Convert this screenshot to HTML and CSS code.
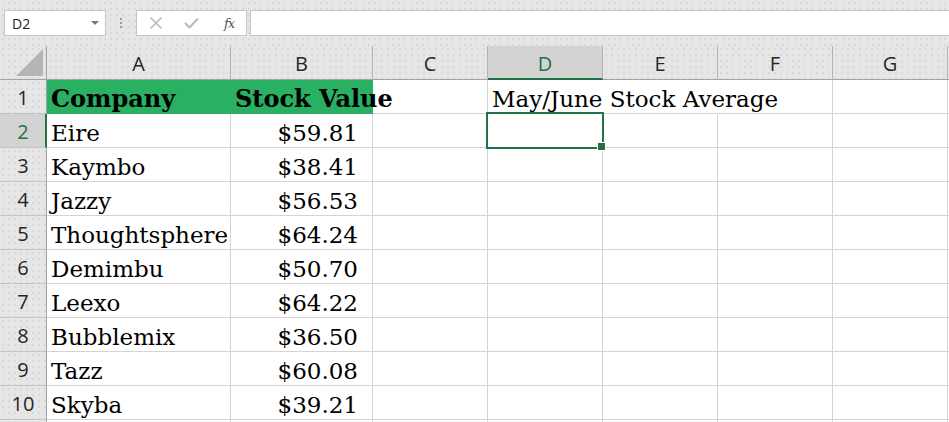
FILE: index.html
```html
<!DOCTYPE html>
<html lang="en">
<head>
<meta charset="utf-8">
<title>Stock Values</title>
<link rel="stylesheet" href="styles.css">
</head>
<body>
<div class="fbar">
  <div class="namebox"><span class="ref">D2</span><span class="caret"></span></div>
  <div class="grip"><i></i><i></i><i></i></div>
  <div class="fxbox">
    <svg class="ico" width="14" height="14" viewBox="0 0 14 14"><path d="M1.5 1.5 L12.5 12.5 M12.5 1.5 L1.5 12.5" stroke="#b9b9b9" stroke-width="1.6" fill="none"/></svg>
    <svg class="ico" width="15" height="12" viewBox="0 0 15 12"><path d="M1 6 L5.5 10.5 L14 1.5" stroke="#b9b9b9" stroke-width="2" fill="none"/></svg>
    <span class="fx">fx</span>
  </div>
  <div class="finput"></div>
</div>

<div class="sheet">
  <div class="corner"><svg width="27" height="27" viewBox="0 0 27 27"><polygon points="27,0 27,27 0,27" fill="#b5b5b5"/></svg></div>
  <div class="ch">A</div>
  <div class="ch">B</div>
  <div class="ch">C</div>
  <div class="ch sel">D</div>
  <div class="ch">E</div>
  <div class="ch">F</div>
  <div class="ch">G</div>
  <div class="ch rest"></div>

  <div class="rh">1</div>
  <div class="c hd">Company</div>
  <div class="c hd">Stock Value</div>
  <div class="c"></div>
  <div class="c spill">May/June Stock Average</div>
  <div class="c spill"></div>
  <div class="c"></div>
  <div class="c"></div>
  <div class="c rest"></div>

  <div class="rh sel">2</div>
  <div class="c">Eire</div>
  <div class="c num">$59.81</div>
  <div class="c"></div>
  <div class="c active"></div>
  <div class="c"></div>
  <div class="c"></div>
  <div class="c"></div>
  <div class="c rest"></div>

  <div class="rh">3</div>
  <div class="c">Kaymbo</div>
  <div class="c num">$38.41</div>
  <div class="c"></div><div class="c"></div><div class="c"></div><div class="c"></div><div class="c"></div><div class="c rest"></div>

  <div class="rh">4</div>
  <div class="c">Jazzy</div>
  <div class="c num">$56.53</div>
  <div class="c"></div><div class="c"></div><div class="c"></div><div class="c"></div><div class="c"></div><div class="c rest"></div>

  <div class="rh">5</div>
  <div class="c">Thoughtsphere</div>
  <div class="c num">$64.24</div>
  <div class="c"></div><div class="c"></div><div class="c"></div><div class="c"></div><div class="c"></div><div class="c rest"></div>

  <div class="rh">6</div>
  <div class="c">Demimbu</div>
  <div class="c num">$50.70</div>
  <div class="c"></div><div class="c"></div><div class="c"></div><div class="c"></div><div class="c"></div><div class="c rest"></div>

  <div class="rh">7</div>
  <div class="c">Leexo</div>
  <div class="c num">$64.22</div>
  <div class="c"></div><div class="c"></div><div class="c"></div><div class="c"></div><div class="c"></div><div class="c rest"></div>

  <div class="rh">8</div>
  <div class="c">Bubblemix</div>
  <div class="c num">$36.50</div>
  <div class="c"></div><div class="c"></div><div class="c"></div><div class="c"></div><div class="c"></div><div class="c rest"></div>

  <div class="rh">9</div>
  <div class="c">Tazz</div>
  <div class="c num">$60.08</div>
  <div class="c"></div><div class="c"></div><div class="c"></div><div class="c"></div><div class="c"></div><div class="c rest"></div>

  <div class="rh">10</div>
  <div class="c">Skyba</div>
  <div class="c num">$39.21</div>
  <div class="c"></div><div class="c"></div><div class="c"></div><div class="c"></div><div class="c"></div><div class="c rest"></div>

  <div class="rh"></div>
  <div class="c"></div><div class="c"></div><div class="c"></div><div class="c"></div><div class="c"></div><div class="c"></div><div class="c"></div><div class="c rest"></div>
</div>
</body>
</html>
```

FILE: styles.css
```css
* { box-sizing: border-box; }

html, body {
  margin: 0;
  height: 100%;
  overflow: hidden;
}

body {
  background-color: #e6e6e6;
  background-image: radial-gradient(circle, #d9d9d9 0.7px, transparent 0.9px);
  background-size: 6px 6px;
  font-family: "Open Sans", "Noto Sans", sans-serif;
}

/* ---------- formula bar ---------- */
.fbar {
  height: 46px;
  display: flex;
  align-items: flex-start;
  padding: 10px 0 0 4px;
}

.namebox {
  width: 102px;
  height: 26px;
  background: #fff;
  border: 1px solid #c6c6c6;
  display: flex;
  align-items: center;
  justify-content: space-between;
  padding: 0 6px 0 7px;
}

.ref {
  font-size: 14px;
  color: #222;
}

.caret {
  width: 0;
  height: 0;
  border-left: 4px solid transparent;
  border-right: 4px solid transparent;
  border-top: 4px solid #7a7a7a;
}

.grip {
  width: 30px;
  height: 26px;
  display: flex;
  flex-direction: column;
  align-items: center;
  justify-content: center;
  gap: 2px;
}

.grip i {
  display: block;
  width: 2px;
  height: 2px;
  background: #9c9c9c;
}

.fxbox {
  width: 111px;
  height: 26px;
  background: #fff;
  border: 1px solid #c6c6c6;
  display: flex;
  align-items: center;
  padding-left: 12px;
  gap: 21px;
}

.ico { display: block; }

.fx {
  font-family: "DejaVu Serif", serif;
  font-style: italic;
  font-size: 13px;
  color: #555;
  letter-spacing: -1px;
  margin-left: 4px;
}

.finput {
  flex: 1;
  height: 26px;
  margin-left: 3px;
  background: #fff;
  border: 1px solid #c6c6c6;
  border-right: none;
}

/* ---------- sheet grid ---------- */
.sheet {
  display: grid;
  grid-template-columns: 47px 184px 142px repeat(5, 115px) 1fr;
  grid-auto-rows: 34px;
  background: #fff;
}

.corner,
.ch,
.rh {
  background-color: #e6e6e6;
  background-image: radial-gradient(circle, #d9d9d9 0.7px, transparent 0.9px);
  background-size: 6px 6px;
}

.corner {
  border-right: 1px solid #a3a3a3;
  border-bottom: 1px solid #a3a3a3;
  display: flex;
  align-items: flex-end;
  justify-content: flex-end;
  padding: 0 3px 3px 0;
}

.corner svg { display: block; }

.ch {
  border-right: 1px solid #b3b3b3;
  border-bottom: 1px solid #a3a3a3;
  display: flex;
  align-items: center;
  justify-content: center;
  font-size: 20px;
  color: #262626;
  padding-top: 1px;
}

.ch.sel {
  background: #d3d3d3;
  color: #217346;
  border-bottom: 2px solid #217346;
  padding-top: 2px;
}

.ch.rest { border-right: none; }

.rh {
  border-right: 1px solid #a3a3a3;
  border-bottom: 1px solid #c4c4c4;
  display: flex;
  align-items: center;
  justify-content: center;
  font-size: 20px;
  color: #262626;
  padding-top: 1px;
}

.rh.sel {
  background: #d3d3d3;
  color: #217346;
  border-right: 2px solid #217346;
  padding-left: 1px;
}

.c {
  border-right: 1px solid #d4d4d4;
  border-bottom: 1px solid #d4d4d4;
  display: flex;
  align-items: flex-end;
  padding: 0 4px 0 4px;
  font-family: "DejaVu Serif", "Liberation Serif", serif;
  font-size: 23px;
  line-height: 27px;
  color: #000;
  white-space: nowrap;
  min-width: 0;
}

.c.rest { border-right: none; }

.c.num {
  justify-content: flex-end;
  padding-right: 14px;
}

.c.hd {
  background: #29b062;
  border-right-color: #29b062;
  border-bottom-color: #29b062;
  font-weight: bold;
  font-size: 24px;
  padding-bottom: 1px;
}

.c.spill { border-right-color: transparent; }

.c.active { position: relative; }

.c.active::after {
  content: "";
  position: absolute;
  left: -2px;
  top: -2px;
  right: -2px;
  bottom: -2px;
  border: 2px solid #217346;
}

.c.active::before {
  content: "";
  position: absolute;
  right: -4px;
  bottom: -4px;
  width: 7px;
  height: 7px;
  background: #217346;
  border: 1px solid #fff;
  z-index: 1;
}
```
